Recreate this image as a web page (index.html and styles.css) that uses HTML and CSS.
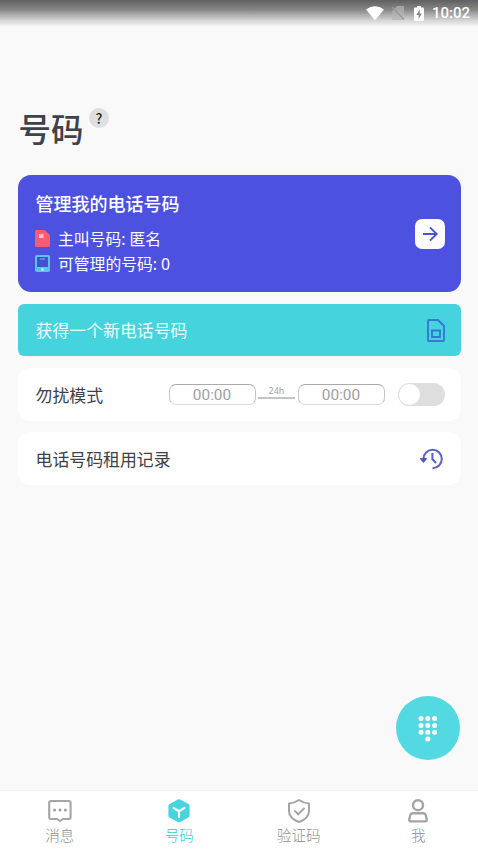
FILE: index.html
```html
<!DOCTYPE html>
<html lang="zh-CN">
<head>
<meta charset="utf-8">
<meta name="viewport" content="width=device-width, initial-scale=1">
<title>号码</title>
<link rel="stylesheet" href="styles.css">
</head>
<body>
<div class="app">
  <header class="status">
    <svg class="wifi" viewBox="0 0 18 15"><path d="M0 3.5Q9-3.2 18 3.5L9 14.5Z" fill="#fff"/></svg>
    <svg class="nosim" viewBox="0 0 12 14"><path d="M5 0H12V14H0V5Z" fill="#b5b5b5" opacity=".7"/><path d="M0 1L12 13.5" stroke="#999" stroke-width="1.2"/></svg>
    <svg class="battery" viewBox="0 0 10 15"><path d="M3 0H7V1.5H9Q10 1.5 10 2.5V14Q10 15 9 15H1Q0 15 0 14V2.5Q0 1.5 1 1.5H3Z" fill="#fff"/><path d="M5.7 3.5L2.3 9H4.6V13L7.9 7.6H5.7Z" fill="#888"/></svg>
    <span>10:02</span>
  </header>
  <main class="content">
    <div class="heading"><h1>号码</h1><span class="help">?</span></div>
    <section class="card manage">
      <div class="manage-text">
        <h2>管理我的电话号码</h2>
        <p>
          <svg viewBox="0 0 15 17"><path d="M1.5 0H9.5L15 5V15.5Q15 17 13.5 17H1.5Q0 17 0 15.5V1.5Q0 0 1.5 0Z" fill="#fb5a70"/><path d="M4 4H8.5V8H4Z" fill="#ffc5d1"/><path d="M5.5 4V6M7 4V6" stroke="#fb8a9b" stroke-width=".5"/></svg>
          <span>主叫号码: 匿名</span>
        </p>
        <p>
          <svg viewBox="0 0 15 17"><rect width="15" height="17" rx="1.8" fill="#58c5e8"/><path d="M2 2H13V12H2Z" fill="#494fd3"/><path d="M5 4H10" stroke="#58c5e8"/><circle cx="7.5" cy="14.4" r="1.2" fill="#d5f5fa"/></svg>
          <span>可管理的号码: 0</span>
        </p>
      </div>
      <span class="go"><svg viewBox="0 0 30 30"><path d="M8 15H21.5M15 8.3L21.7 15L15 21.7" fill="none" stroke="#4d51cf" stroke-width="1.9"/></svg></span>
    </section>
    <section class="card row new">
      <span>获得一个新电话号码</span>
      <svg class="sim" viewBox="0 0 18 23"><path d="M1 2Q1 1 2 1H11L17 7V21Q17 22 16 22H2Q1 22 1 21Z" fill="none" stroke="#3977d5" stroke-width="1.9"/><path d="M5 11.5H13V18H5Z" fill="none" stroke="#3977d5" stroke-width="1.9"/></svg>
    </section>
    <section class="card row quiet">
      <span class="label">勿扰模式</span>
      <span class="time">00:00</span>
      <span class="span">24h</span>
      <span class="time">00:00</span>
      <span class="toggle"></span>
    </section>
    <section class="card row">
      <span>电话号码租用记录</span>
      <svg class="history" viewBox="0 0 24 22"><path d="M3.4 11A9.2 9.2 0 1 1 12.5 20.2" fill="none" stroke="#5f63c9" stroke-width="2.1"/><path d="M0.8 10.8H6.2L3.5 14Z" fill="#5559c5" stroke="#5559c5" stroke-width="1.4" stroke-linejoin="round"/><path d="M12.4 5V11L16 15" fill="none" stroke="#5f63c9" stroke-width="2.1"/></svg>
    </section>
    <div class="dial">
      <svg viewBox="0 0 20 27" fill="#fff"><circle cx="3" cy="3.5" r="2.5"/><circle cx="9.8" cy="3.5" r="2.5"/><circle cx="16.6" cy="3.5" r="2.5"/><circle cx="3" cy="10.4" r="2.5"/><circle cx="9.8" cy="10.4" r="2.5"/><circle cx="16.6" cy="10.4" r="2.5"/><circle cx="3" cy="17.2" r="2.5"/><circle cx="9.8" cy="17.2" r="2.5"/><circle cx="16.6" cy="17.2" r="2.5"/><circle cx="9.8" cy="24" r="2.5"/></svg>
    </div>
  </main>
  <nav class="tabs">
    <div class="tab"><svg viewBox="0 0 24 24"><path d="M3 2H21Q22.6 2 22.6 4V18Q22.6 20 21 20H15L12 22L9 20H3Q1.2 20 1.2 18V4Q1.2 2 3 2Z" fill="none" stroke="#a5a5a5" stroke-width="2.1" stroke-linejoin="round"/><g fill="#a1a1a1"><circle cx="6.6" cy="11" r="1.5"/><circle cx="12" cy="11" r="1.5"/><circle cx="17.4" cy="11" r="1.5"/></g></svg><span>消息</span></div>
    <div class="tab active"><svg viewBox="0 0 24 24"><path d="M10.8 .5Q12-.2 13.2 .5L21.4 5Q22.6 5.7 22.6 7V16.5Q22.6 17.8 21.4 18.5L13.2 23Q12 23.8 10.8 23L2.6 18.5Q1.4 17.8 1.4 16.5V7Q1.4 5.7 2.6 5Z" fill="#48d4df"/><path d="M6.4 8.8L12 12.2L17.6 8.8M12 12.2V18.3" fill="none" stroke="#fff" stroke-width="2.1" stroke-linecap="round"/></svg><span>号码</span></div>
    <div class="tab"><svg viewBox="0 0 24 24"><path d="M12 1Q16.5 4 22 4.6V12Q22 19.4 12 23Q2 19.4 2 12V4.6Q7.5 4 12 1Z" fill="none" stroke="#a5a5a5" stroke-width="2" stroke-linejoin="round"/><path d="M7.3 11.4L11.2 15.3L17.6 8.9" fill="none" stroke="#a5a5a5" stroke-width="2"/></svg><span>验证码</span></div>
    <div class="tab"><svg viewBox="0 0 24 24"><g fill="none" stroke="#a5a5a5" stroke-width="2.4"><circle cx="12" cy="6.2" r="5"/><path d="M6.4 14.2H17.6Q19.2 14.2 19.7 16L20.7 20.2Q21.2 22.4 19 22.4H5Q2.8 22.4 3.3 20.2L4.3 16Q4.8 14.2 6.4 14.2Z"/></g></svg><span>我</span></div>
  </nav>
</div>
</body>
</html>
```

FILE: styles.css
```css
* { box-sizing: border-box; }
body { margin: 0; background: #f9f9f9; color: #404249; font-family: "Noto Sans CJK SC", sans-serif; }
svg { display: block; flex: none; overflow: visible; }
h1, h2, p { margin: 0; }
.app { height: 849px; display: flex; flex-direction: column; overflow: hidden; }
.status { height: 27px; flex: none; display: flex; align-items: center; justify-content: flex-end; padding: 0 8px 1px 0; color: #fff; font: 500 15px/20px Roboto, sans-serif; background: linear-gradient(#606060, #858585 35%, #d4d4d4 75%, #f9f9f9); }
.wifi { width: 18px; height: 15px; margin-right: 8px; }
.nosim { width: 12px; height: 14px; margin-right: 10px; }
.battery { width: 10px; height: 15px; margin-right: 8px; }
.content { flex: 1; padding: 76px 17.5px 0; position: relative; }
.heading { height: 72px; display: flex; align-items: flex-start; }
h1 { font-size: 32.5px; line-height: 50px; font-weight: 500; width: 71.5px; padding-left: 1px; }
.help { width: 20px; height: 20px; margin-top: 5px; border-radius: 50%; background: #dfdfdf; color: #222; text-align: center; font: 500 14px/20px "Noto Sans CJK SC", sans-serif; }
.card { border-radius: 12px; background: #fff; padding: 0 16px 0 18px; display: flex; align-items: center; }
.manage { height: 117px; background: #4d51e0; color: #fff; border-radius: 13px; justify-content: space-between; }
.manage-text { height: 117px; padding-top: 15px; }
h2 { font-size: 18px; line-height: 28px; height: 36px; font-weight: 500; margin-top: -1px; margin-bottom: 1px; }
.manage p { display: flex; align-items: center; height: 25px; font-size: 15.8px; line-height: 25px; }
.manage p svg { width: 15px; height: 17px; margin: -1px 8px 0 -.5px; }
.manage p span { font-family: "Noto Sans", "Noto Sans CJK SC", sans-serif; padding-top: 2px; }
.go { width: 30px; height: 30px; border-radius: 7px; background: #fcfcff; }
.row { height: 53px; margin-top: 12px; justify-content: space-between; font-size: 16.9px; line-height: 25px; }
.row.new { height: 52px; background: #45d3dd; color: #eaffff; border-radius: 6px; }
.new span { margin-top: -1px; }
.row + .row { margin-top: 11.5px; }
.sim { width: 18px; height: 23px; }
.quiet { justify-content: flex-start; }
.label { width: 133px; }
.time { width: 87px; height: 21px; border: 1px solid #c5c5c5; border-top-color: #aaa; border-bottom-color: #ddd; border-radius: 7px; color: #a0a0a0; text-align: center; font: 15.4px/20px Roboto, sans-serif; }
.span { width: 37px; height: 14px; margin: -4px 2.5px 0; border-bottom: 2px solid #c4c4c4; text-align: center; color: #a0a0a0; font: 9px/12px "Noto Sans", sans-serif; }
.toggle { width: 47px; height: 23px; margin-left: auto; padding: 1px; border-radius: 12px; background: #dedede; }
.toggle::before { content: ""; display: block; width: 21px; height: 21px; border-radius: 50%; background: #fff; }
.history { width: 24px; height: 22px; margin-right: .5px; }
.dial { position: absolute; right: 18px; bottom: 30px; width: 64px; height: 64px; border-radius: 50%; background: #52d9e2; display: grid; place-items: center; }
.dial svg { width: 20px; height: 27px; }
.tabs { height: 59px; flex: none; display: flex; background: #fff; border-top: 1px solid #f1f1f1; }
.tab { flex: 1; display: flex; flex-direction: column; align-items: center; padding-top: 8px; font-size: 14.6px; line-height: 24px; font-weight: 300; color: #8f8f8f; }
.tab svg { width: 24px; height: 24px; }
.tab.active { color: #2dd0dc; }
```
